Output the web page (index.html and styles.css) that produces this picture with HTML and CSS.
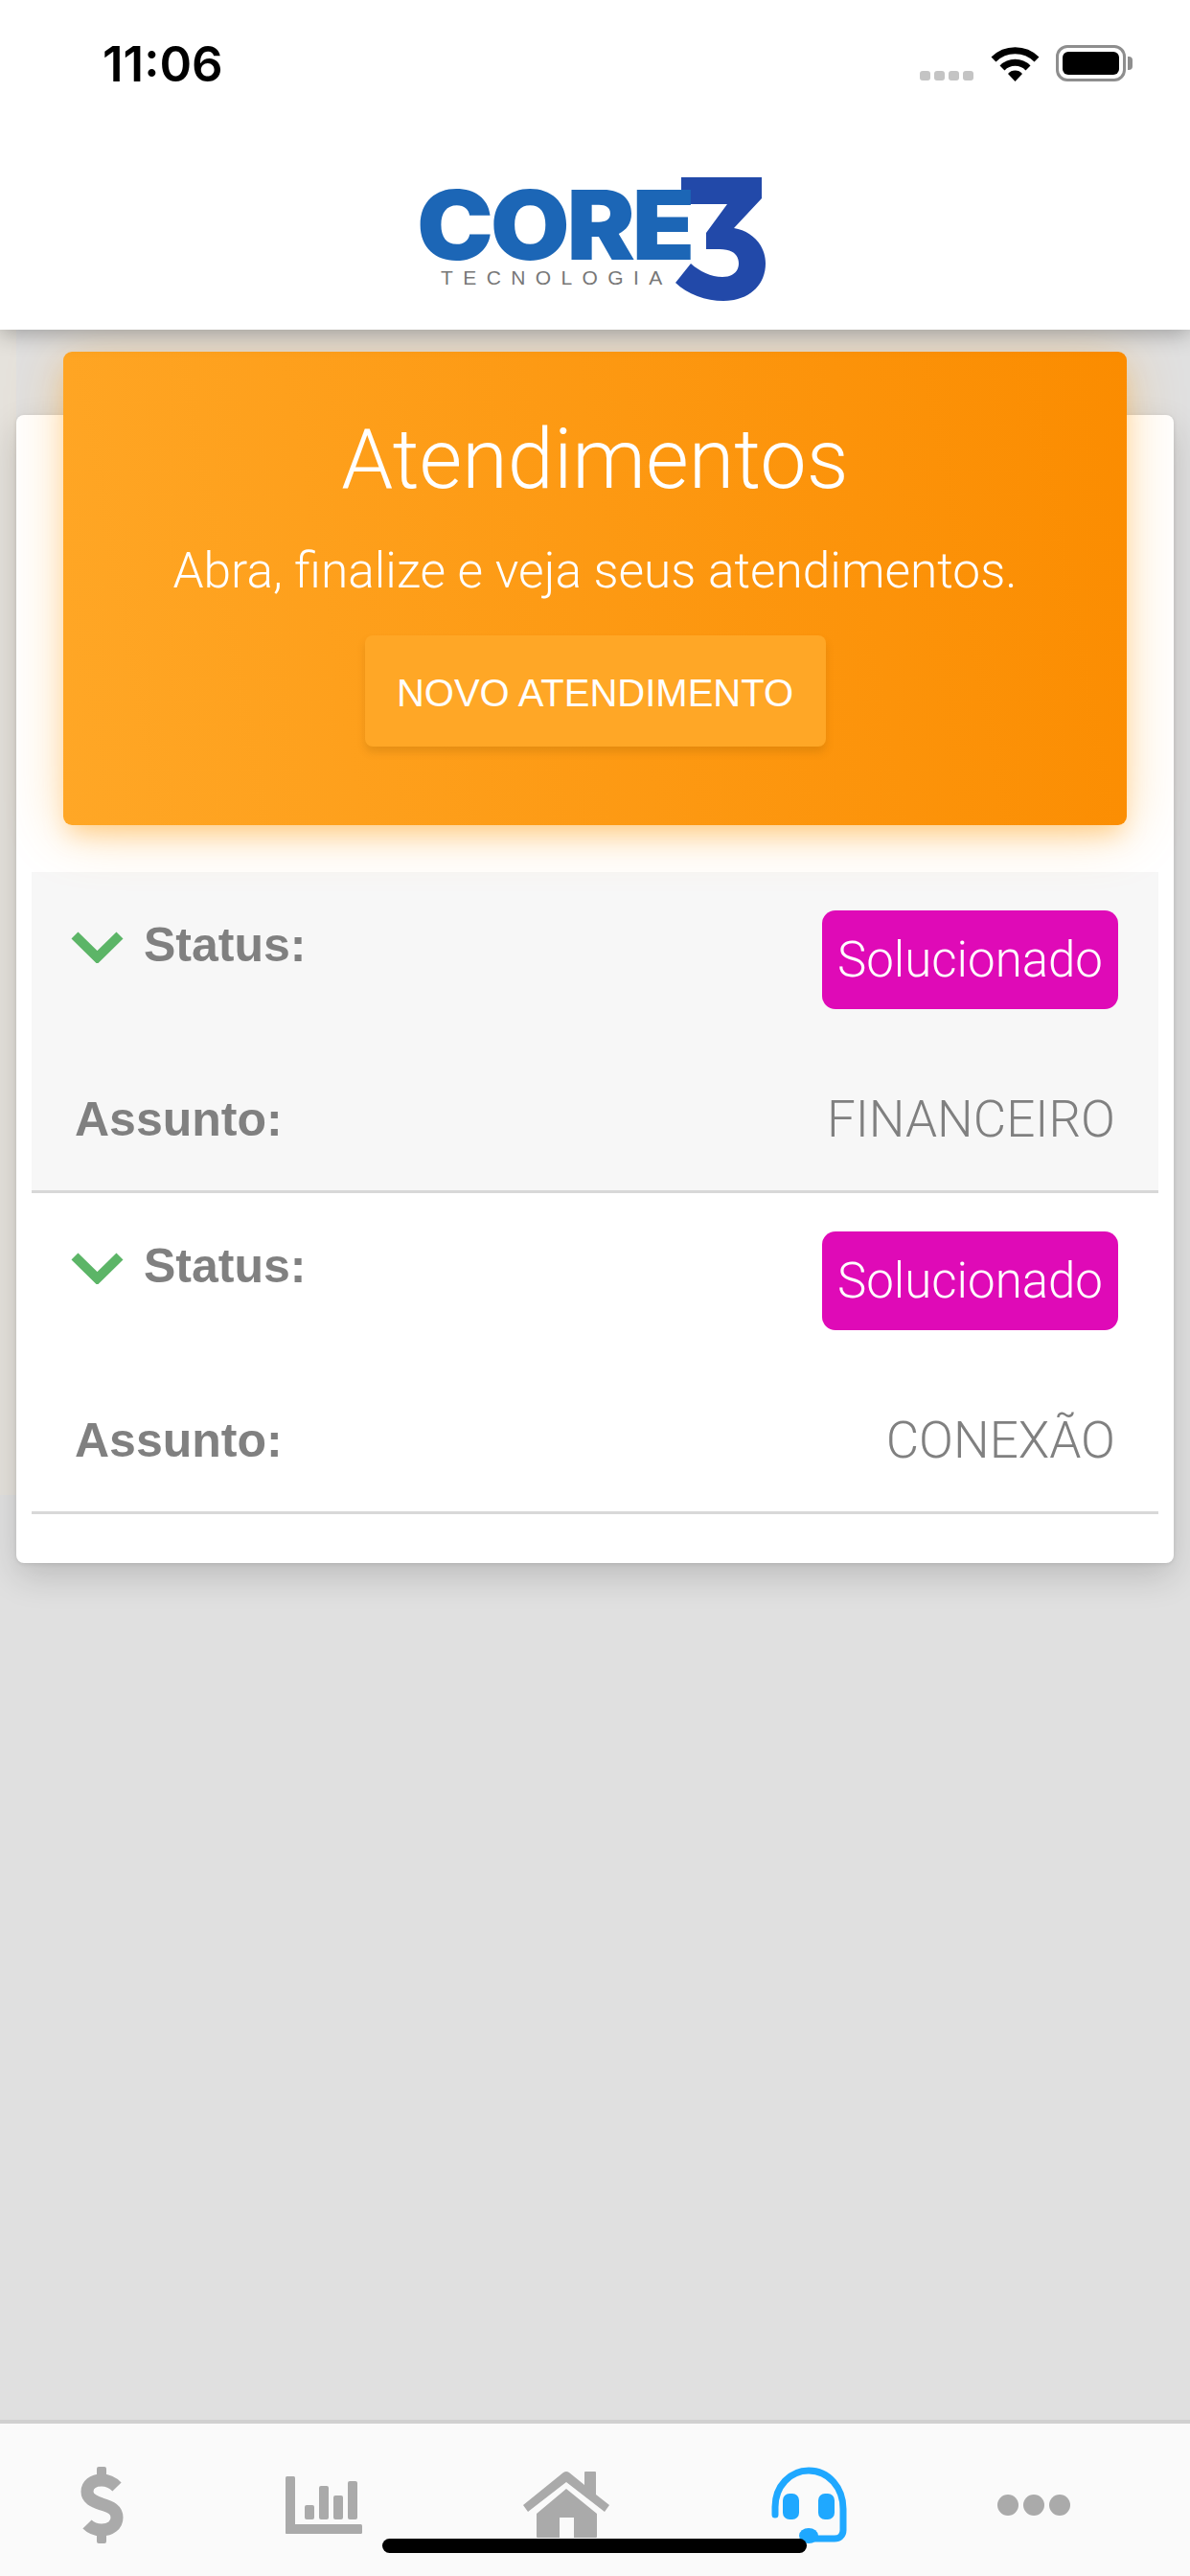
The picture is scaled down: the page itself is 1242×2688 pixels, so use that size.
FILE: index.html
```html
<!DOCTYPE html>
<html lang="pt">
<head>
  <meta charset="UTF-8" />
  <meta name="viewport" content="width=device-width, initial-scale=1.0" />
  <title>Atendimentos</title>
  <link rel="stylesheet" href="styles.css">
</head>
<body>
  <header class="top">
    <div class="status-bar">
      <span class="time">11:06</span>
      <div class="status-icons">
        <div class="signal"><i></i><i></i><i></i><i></i></div>
        <svg class="wifi" viewBox="0 0 51 37">
          <path d="M3 14 A32 32 0 0 1 48 14" fill="none" stroke="#000" stroke-width="7"/>
          <path d="M12 23 A19 19 0 0 1 39 23" fill="none" stroke="#000" stroke-width="7"/>
          <path d="M18 29 A10 10 0 0 1 33 29 L25.5 37 Z" fill="#000"/>
        </svg>
        <div class="battery"><div class="battery-level"></div></div>
        <div class="battery-cap"></div>
      </div>
    </div>
    <div class="logo-area">
      <div class="logo">
        <div class="logo-text">
          <div class="logo-core">CORE</div>
          <div class="logo-sub">TECNOLOGIA</div>
        </div>
        <svg class="logo-mark" viewBox="0 0 94 130">
          <path d="M6 0 H90 V22 L61 53 C80 56 94 71 94 90 C94 113 76 129 50 129 C32 129 12 122 0 110 L16 90 C25 98 37 104 49 104 C60 104 66 98 66 90 C66 80 58 75 46 75 H32 V58 L54 28 H6 Z" fill="#2249a9"/>
        </svg>
      </div>
    </div>
  </header>

  <main class="content">
    <section class="card">
      <div class="card-header">
        <h1>Atendimentos</h1>
        <p>Abra, finalize e veja seus atendimentos.</p>
        <button class="btn-new">NOVO ATENDIMENTO</button>
      </div>

      <div class="tickets">
        <div class="ticket ticket-odd">
          <div class="ticket-top">
            <div class="status">
              <svg class="chevron" viewBox="0 0 57 34"><path d="M5 5 L28.5 28 L52 5" fill="none" stroke="#5cb567" stroke-width="10"/></svg>
              <b>Status:</b>
            </div>
            <span class="badge">Solucionado</span>
          </div>
          <div class="ticket-bottom">
            <b>Assunto:</b>
            <span class="subject">FINANCEIRO</span>
          </div>
        </div>
        <div class="ticket">
          <div class="ticket-top">
            <div class="status">
              <svg class="chevron" viewBox="0 0 57 34"><path d="M5 5 L28.5 28 L52 5" fill="none" stroke="#5cb567" stroke-width="10"/></svg>
              <b>Status:</b>
            </div>
            <span class="badge">Solucionado</span>
          </div>
          <div class="ticket-bottom">
            <b>Assunto:</b>
            <span class="subject">CONEXÃO</span>
          </div>
        </div>
      </div>
    </section>
  </main>

  <nav class="tabs">
    <svg class="tab-dollar" viewBox="0 0 45 80">
      <path d="M38 21 C33 16 28 14 22 14 C13 14 7 19 7 26 C7 33 13 36 22 39 C32 42 38 45 38 53 C38 61 31 66 22 66 C16 66 11 64 7 60" fill="none" stroke="#aaa" stroke-width="13"/>
      <rect x="17" y="0" width="10" height="14" rx="2" fill="#aaa"/>
      <rect x="17" y="66" width="10" height="14" rx="2" fill="#aaa"/>
    </svg>
    <svg class="tab-chart" viewBox="0 0 80 60" fill="#aaa">
      <rect x="0" y="0" width="10" height="60" rx="1.5"/>
      <rect x="0" y="50" width="80" height="10" rx="1.5"/>
      <rect x="20" y="30" width="10" height="15" rx="2"/>
      <rect x="35" y="10" width="10" height="35" rx="2"/>
      <rect x="50" y="20" width="10" height="25" rx="2"/>
      <rect x="65" y="5" width="10" height="40" rx="2"/>
    </svg>
    <svg class="tab-home" viewBox="0 0 90 70" fill="#aaa">
      <path d="M0 35 L42 1 Q45 -1 48 1 L64 14 V1 Q64 0 65 0 H75 Q76 0 76 1 V24 L90 35 L85 42 L45 11 L5 42 Z"/>
      <path d="M45 18 L77 44 V68 Q77 69 76 69 H53 V48 H38 V69 H15 Q14 69 14 68 V44 Z"/>
    </svg>
    <svg class="tab-headset" viewBox="0 0 80 80">
      <path d="M4 50 V42 C4 20 20 4 39 4 C60 4 75 22 75 44 V66 C75 72 71 75 66 75 H38" fill="none" stroke="#1fa8ff" stroke-width="7" stroke-linecap="round"/>
      <rect x="12" y="28" width="17" height="27" rx="7" fill="#1fa8ff"/>
      <rect x="49" y="28" width="17" height="27" rx="7" fill="#1fa8ff"/>
      <ellipse cx="39" cy="72" rx="10" ry="8" fill="#1fa8ff"/>
    </svg>
    <div class="tab-more"><i></i><i></i><i></i></div>
    <div class="home-indicator"></div>
  </nav>
</body>
</html>
```

FILE: styles.css
```css
body {
  margin: 0;
  width: 1242px;
  height: 2688px;
  display: flex;
  flex-direction: column;
  background-color: #e0e0e0;
  font-family: "Liberation Sans", Arial, sans-serif;
  overflow: hidden;
}

/* topo */
.top {
  height: 344px;
  background: #fff;
  box-shadow: 0 4px 22px rgba(0,0,0,0.3);
  position: relative;
  z-index: 2;
}
.status-bar {
  height: 132px;
  display: flex;
  justify-content: space-between;
  align-items: center;
  padding: 0 60px 0 107px;
}
.time {
  font-family: Inter, sans-serif;
  font-size: 51px;
  font-weight: 600;
  color: #000;
}
.status-icons {
  display: flex;
  align-items: flex-end;
}
.signal {
  display: flex;
  gap: 4px;
  margin: 0 18px 1px 0;
}
.signal i {
  width: 11px;
  height: 10px;
  border-radius: 3px;
  background: #c4c4c4;
}
.wifi {
  width: 51px;
  height: 37px;
  margin-right: 17px;
}
.battery {
  width: 73px;
  height: 38px;
  box-sizing: border-box;
  border: 3px solid #8e8e8e;
  border-radius: 12px;
  padding: 4px;
}
.battery-level {
  height: 100%;
  background: #000;
  border-radius: 6px;
}
.battery-cap {
  width: 5px;
  height: 14px;
  margin: 0 0 12px 2px;
  background: #8e8e8e;
  border-radius: 0 4px 4px 0;
}
.logo-area {
  display: flex;
  justify-content: center;
  padding: 53px 8px 0 0;
}
.logo {
  display: flex;
  align-items: flex-start;
}
.logo-text {
  padding-top: 13px;
  width: 270px;
}
.logo-core {
  font-family: Inter, sans-serif;
  font-weight: 900;
  font-size: 100px;
  line-height: 74px;
  letter-spacing: -3px;
  color: #1c66b6;
  transform: scaleX(1.07);
  transform-origin: left;
}
.logo-sub {
  font-family: "Liberation Sans", sans-serif;
  font-size: 21px;
  line-height: 24px;
  letter-spacing: 10.4px;
  color: #777;
  white-space: nowrap;
  margin: 6px 0 0 25px;
}
.logo-mark {
  width: 94px;
  height: 130px;
}

/* cartao */
.content {
  flex: 1;
  padding: 89px 17px 0;
  background: linear-gradient(#e5e2dc, #e5e2dc) no-repeat 0 0 / 17px 1216px;
}
.card {
  display: flow-root;
  background: #fff;
  border-radius: 8px;
  padding: 0 16px 51px;
  box-shadow: 0 14px 36px rgba(0,0,0,0.16), 0 1px 4px rgba(0,0,0,0.1);
}
.card-header {
  margin: -66px 33px 49px;
  height: 494px;
  box-sizing: border-box;
  padding-top: 63px;
  background: linear-gradient(80deg, #ffa726, #fb8c00);
  border-radius: 9px;
  box-shadow: 0 6px 60px rgba(255,152,0,0.3), 0 14px 26px -6px rgba(255,152,0,0.35);
  text-align: center;
  color: #fff;
  position: relative;
}
.card-header h1 {
  margin: 0;
  font-family: Roboto, sans-serif;
  font-size: 86.5px;
  font-weight: 300;
  line-height: 100px;
}
.card-header p {
  margin: 36px 0 0;
  font-family: Roboto, sans-serif;
  font-size: 51.4px;
  font-weight: 300;
  line-height: 60px;
}
.btn-new {
  display: block;
  width: 481px;
  height: 116px;
  margin: 37px auto 0;
  padding: 4px 0 0;
  border: none;
  border-radius: 8px;
  background: #ffa726;
  box-shadow: 0 6px 8px rgba(120,80,0,0.18);
  color: #fff;
  font-family: "Liberation Sans", sans-serif;
  font-size: 40px;
}

/* lista */
.ticket {
  height: 335px;
  box-sizing: border-box;
  border-bottom: 3px solid #d8d8d8;
  color: #808080;
  font-size: 50px;
}
.ticket-odd {
  background: #f7f7f7;
}
.ticket-top {
  display: flex;
  justify-content: space-between;
  align-items: flex-start;
  padding: 40px 42px 0 40px;
}
.status {
  display: flex;
  align-items: flex-start;
  gap: 20px;
  margin-top: 8px;
  line-height: 56px;
}
.chevron {
  width: 57px;
  height: 34px;
  margin-top: 13px;
}
.badge {
  width: 309px;
  height: 103px;
  border-radius: 14px;
  background: #df0ab7;
  color: #fff;
  font-family: Roboto, sans-serif;
  font-weight: 300;
  font-size: 51px;
  line-height: 103px;
  text-align: center;
}
.ticket-bottom {
  display: flex;
  justify-content: space-between;
  margin-top: 87px;
  padding: 0 45px;
  line-height: 56px;
}
.subject {
  font-family: Roboto, sans-serif;
  font-weight: 300;
  font-size: 53px;
}

/* abas */
.tabs {
  height: 163px;
  box-sizing: border-box;
  border-top: 4px solid #d0d0d0;
  background: #fafafa;
  display: flex;
  align-items: center;
  padding: 45px 0 34px 84px;
  position: relative;
}
.tab-dollar {
  width: 45px;
  height: 80px;
}
.tab-chart {
  width: 80px;
  height: 60px;
  margin-left: 169px;
}
.tab-home {
  width: 90px;
  height: 70px;
  margin-left: 168px;
}
.tab-headset {
  width: 80px;
  height: 80px;
  margin-left: 169px;
}
.tab-more {
  display: flex;
  gap: 5px;
  margin-left: 156px;
}
.tab-more i {
  width: 22px;
  height: 22px;
  border-radius: 50%;
  background: #aaa;
}
.home-indicator {
  position: absolute;
  left: 399px;
  top: 120px;
  width: 443px;
  height: 15px;
  border-radius: 8px;
  background: #000;
}
```
